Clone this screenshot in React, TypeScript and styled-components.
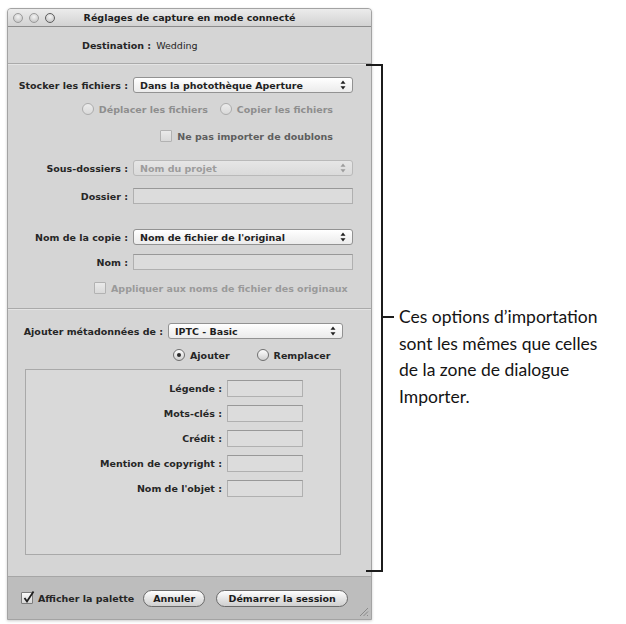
import React from 'react';
import styled, { createGlobalStyle } from 'styled-components';

const GlobalStyle = createGlobalStyle`
  html, body {
    margin: 0;
    background: #fff;
  }
  body {
    font-family: "DejaVu Sans", "Liberation Sans", sans-serif;
  }
`;

const Page = styled.div`
  display: flex;
  align-items: flex-start;
  width: 626px;
  height: 624px;
  box-sizing: border-box;
  padding: 8px 0 0 7px;
`;

const Window = styled.div`
  flex: none;
  width: 365px;
  box-sizing: border-box;
  display: flex;
  flex-direction: column;
  background: #d5d5d5;
  border: 1px solid #a3a3a3;
  border-radius: 4px 4px 0 0;
  box-shadow: 0 1px 3px rgba(0, 0, 0, 0.2);
  font-size: 9.5px;
  font-weight: bold;
  color: #262626;
  overflow: hidden;
`;

const TitleBar = styled.div`
  height: 17px;
  display: flex;
  align-items: center;
  background: linear-gradient(#ececec, #d2d2d2);
  border-bottom: 1px solid #8c8c8c;
`;

const Lights = styled.div`
  width: 52px;
  display: flex;
  gap: 6px;
  padding-left: 5px;
  box-sizing: border-box;
`;

const Light = styled.span<{ $dark?: boolean }>`
  width: 10px;
  height: 10px;
  border-radius: 50%;
  box-sizing: border-box;
  border: 1.5px solid ${(p) => (p.$dark ? '#5e5e5e' : '#9a9a9a')};
  background: radial-gradient(circle at 50% 35%, #f4f4f4, #bcbcbc);
`;

const Title = styled.div`
  flex: 1;
  margin-right: 52px;
  text-align: center;
  color: #1e1e1e;
`;

const DestinationRow = styled.div`
  height: 36px;
  display: flex;
  align-items: center;
  padding-left: 74px;
`;

const Plain = styled.span`
  font-weight: normal;
  margin-left: 5px;
`;

const Divider = styled.div`
  height: 0;
  border-top: 1px solid #aaaaaa;
  border-bottom: 1px solid #e4e4e4;
`;

const Section = styled.div<{ $pad: string }>`
  display: flex;
  flex-direction: column;
  padding: ${(p) => p.$pad};
`;

const Row = styled.div<{ $mt?: number }>`
  display: flex;
  align-items: center;
  height: 16px;
  margin-top: ${(p) => p.$mt ?? 0}px;
`;

const Label = styled.span<{ $w?: number }>`
  flex: none;
  width: ${(p) => p.$w ?? 125}px;
  padding-right: 5px;
  box-sizing: border-box;
  text-align: right;
  white-space: nowrap;
`;

const Popup = styled.div<{ $w?: number; $disabled?: boolean }>`
  width: ${(p) => p.$w ?? 220}px;
  height: 16px;
  box-sizing: border-box;
  display: flex;
  align-items: center;
  justify-content: space-between;
  padding: 0 6px;
  border: 1px solid ${(p) => (p.$disabled ? '#b9b9b9' : '#929292')};
  border-radius: 3px;
  background: ${(p) =>
    p.$disabled ? 'linear-gradient(#e6e6e6, #dadada)' : 'linear-gradient(#ffffff, #ebebeb)'};
  color: ${(p) => (p.$disabled ? '#9c9c9c' : '#1f1f1f')};
  white-space: nowrap;
`;

const Field = styled.div<{ $w?: number; $h?: number }>`
  width: ${(p) => p.$w ?? 220}px;
  height: ${(p) => p.$h ?? 16}px;
  box-sizing: border-box;
  border: 1px solid #b0b0b0;
  border-top-color: #989898;
  background: #dcdcdc;
`;

const OptionRow = styled.div<{ $mt: number; $gap: number; $pl?: number }>`
  display: flex;
  align-items: center;
  height: 16px;
  margin-top: ${(p) => p.$mt}px;
  gap: ${(p) => p.$gap}px;
  justify-content: ${(p) => (p.$pl !== undefined ? 'flex-start' : 'flex-end')};
  padding-left: ${(p) => p.$pl ?? 0}px;
  padding-right: ${(p) => (p.$pl !== undefined ? 0 : 38)}px;
`;

const Option = styled.span<{ $tone?: string }>`
  display: flex;
  align-items: center;
  gap: 5px;
  white-space: nowrap;
  color: ${(p) => p.$tone ?? '#262626'};
`;

const Radio = styled.span<{ $checked?: boolean; $disabled?: boolean }>`
  position: relative;
  width: 12px;
  height: 12px;
  border-radius: 50%;
  box-sizing: border-box;
  border: 1px solid ${(p) => (p.$disabled ? '#acacac' : '#6f6f6f')};
  background: ${(p) =>
    p.$disabled ? 'linear-gradient(#ececec, #d9d9d9)' : 'linear-gradient(#fdfdfd, #cfcfcf)'};

  &::after {
    content: '';
    display: ${(p) => (p.$checked ? 'block' : 'none')};
    position: absolute;
    left: 3px;
    top: 3px;
    width: 4px;
    height: 4px;
    border-radius: 50%;
    background: #2a2a2a;
  }
`;

const Check = styled.span<{ $disabled?: boolean }>`
  position: relative;
  width: 12px;
  height: 12px;
  box-sizing: border-box;
  border: 1px solid ${(p) => (p.$disabled ? '#b2b2b2' : '#7c7c7c')};
  border-radius: 1px;
  background: ${(p) =>
    p.$disabled ? 'linear-gradient(#eaeaea, #d9d9d9)' : 'linear-gradient(#fbfbfb, #d6d6d6)'};

  svg {
    position: absolute;
    left: 0;
    top: -3px;
  }
`;

const MetaBox = styled.div`
  margin: 6px 0 0 17px;
  width: 316px;
  height: 186px;
  box-sizing: border-box;
  border: 1px solid #a9a9a9;
  background: #d9d9d9;
  padding-top: 10px;
  display: flex;
  flex-direction: column;
  gap: 8px;
`;

const MetaRow = styled.div`
  display: flex;
  align-items: center;
  height: 17px;
`;

const BottomBar = styled.div`
  height: 42px;
  display: flex;
  align-items: center;
  padding-left: 13px;
  background: #bdbdbd;
  border-top: 1px solid #a6a6a6;
`;

const Button = styled.span<{ $w: number; $ml: number }>`
  width: ${(p) => p.$w}px;
  height: 17px;
  margin-left: ${(p) => p.$ml}px;
  box-sizing: border-box;
  display: flex;
  align-items: center;
  justify-content: center;
  border: 1px solid #6b6b6b;
  border-radius: 9px;
  background: linear-gradient(#ffffff, #e3e3e3 55%, #cfcfcf);
  color: #1c1c1c;
  white-space: nowrap;
`;

const Grip = styled.svg`
  margin-left: auto;
  align-self: flex-end;
  margin-bottom: 2px;
  margin-right: 2px;
`;

const Bracket = styled.div`
  flex: none;
  margin: 56px 0 0 -6px;
  width: 17px;
  height: 508px;
  box-sizing: border-box;
  border: 2px solid #1c1c1c;
  border-left: none;
`;

const Note = styled.div`
  display: flex;
  align-items: flex-start;
  margin-top: 296px;
`;

const Tick = styled.span`
  flex: none;
  width: 11px;
  height: 2px;
  margin-top: 12px;
  background: #1c1c1c;
`;

const NoteText = styled.p`
  margin: 0 0 0 5px;
  font-family: Lato, "Open Sans", sans-serif;
  font-size: 17.5px;
  line-height: 26.6px;
  color: #141414;
  white-space: nowrap;
`;

const Arrows = () => (
  <svg width="6" height="10" viewBox="0 0 6 10">
    <path d="M3 0.5 L5.5 3.8 H0.5 Z" fill="currentColor" />
    <path d="M3 9.5 L5.5 6.2 H0.5 Z" fill="currentColor" />
  </svg>
);

const CheckMark = () => (
  <svg width="14" height="14" viewBox="0 0 14 14">
    <path d="M2.5 8 L5 11.5 L11.5 1.5" fill="none" stroke="#1e1e1e" strokeWidth="1.8" />
  </svg>
);

const metaFields = ['Légende :', 'Mots-clés :', 'Crédit :', 'Mention de copyright :', "Nom de l'objet :"];

export default function App() {
  return (
    <Page>
      <GlobalStyle />
      <Window>
        <TitleBar>
          <Lights>
            <Light />
            <Light />
            <Light $dark />
          </Lights>
          <Title>Réglages de capture en mode connecté</Title>
        </TitleBar>

        <DestinationRow>
          Destination :<Plain>Wedding</Plain>
        </DestinationRow>
        <Divider />

        <Section $pad="12px 0 12px 0">
          <Row>
            <Label>Stocker les fichiers :</Label>
            <Popup>
              Dans la photothèque Aperture
              <Arrows />
            </Popup>
          </Row>
          <OptionRow $mt={8} $gap={12}>
            <Option $tone="#8e8e8e">
              <Radio $disabled />
              Déplacer les fichiers
            </Option>
            <Option $tone="#8e8e8e">
              <Radio $disabled />
              Copier les fichiers
            </Option>
          </OptionRow>
          <OptionRow $mt={11} $gap={0}>
            <Option $tone="#5e5e5e">
              <Check $disabled />
              Ne pas importer de doublons
            </Option>
          </OptionRow>
          <Row $mt={16}>
            <Label>Sous-dossiers :</Label>
            <Popup $disabled>
              Nom du projet
              <Arrows />
            </Popup>
          </Row>
          <Row $mt={12}>
            <Label>Dossier :</Label>
            <Field />
          </Row>
          <Row $mt={25}>
            <Label>Nom de la copie :</Label>
            <Popup>
              Nom de fichier de l'original
              <Arrows />
            </Popup>
          </Row>
          <Row $mt={9}>
            <Label>Nom :</Label>
            <Field />
          </Row>
          <OptionRow $mt={10} $gap={0} $pl={86}>
            <Option $tone="#9a9a9a">
              <Check $disabled />
              Appliquer aux noms de fichier des originaux
            </Option>
          </OptionRow>
        </Section>
        <Divider />

        <Section $pad="13px 0 21px 0">
          <Row>
            <Label $w={160}>Ajouter métadonnées de :</Label>
            <Popup $w={175}>
              IPTC - Basic
              <Arrows />
            </Popup>
          </Row>
          <OptionRow $mt={8} $gap={27} $pl={165}>
            <Option>
              <Radio $checked />
              Ajouter
            </Option>
            <Option>
              <Radio />
              Remplacer
            </Option>
          </OptionRow>
          <MetaBox>
            {metaFields.map((name) => (
              <MetaRow key={name}>
                <Label $w={201}>{name}</Label>
                <Field $w={76} $h={17} />
              </MetaRow>
            ))}
          </MetaBox>
        </Section>

        <BottomBar>
          <Option>
            <Check>
              <CheckMark />
            </Check>
            Afficher la palette
          </Option>
          <Button $w={62} $ml={9}>
            Annuler
          </Button>
          <Button $w={132} $ml={11}>
            Démarrer la session
          </Button>
          <Grip width="11" height="11" viewBox="0 0 11 11">
            <path d="M10 2 L2 10 M10 5.5 L5.5 10 M10 9 L9 10" stroke="#8a8a8a" strokeWidth="1" />
          </Grip>
        </BottomBar>
      </Window>

      <Bracket />
      <Note>
        <Tick />
        <NoteText>
          Ces options d’importation
          <br />
          sont les mêmes que celles
          <br />
          de la zone de dialogue
          <br />
          Importer.
        </NoteText>
      </Note>
    </Page>
  );
}
